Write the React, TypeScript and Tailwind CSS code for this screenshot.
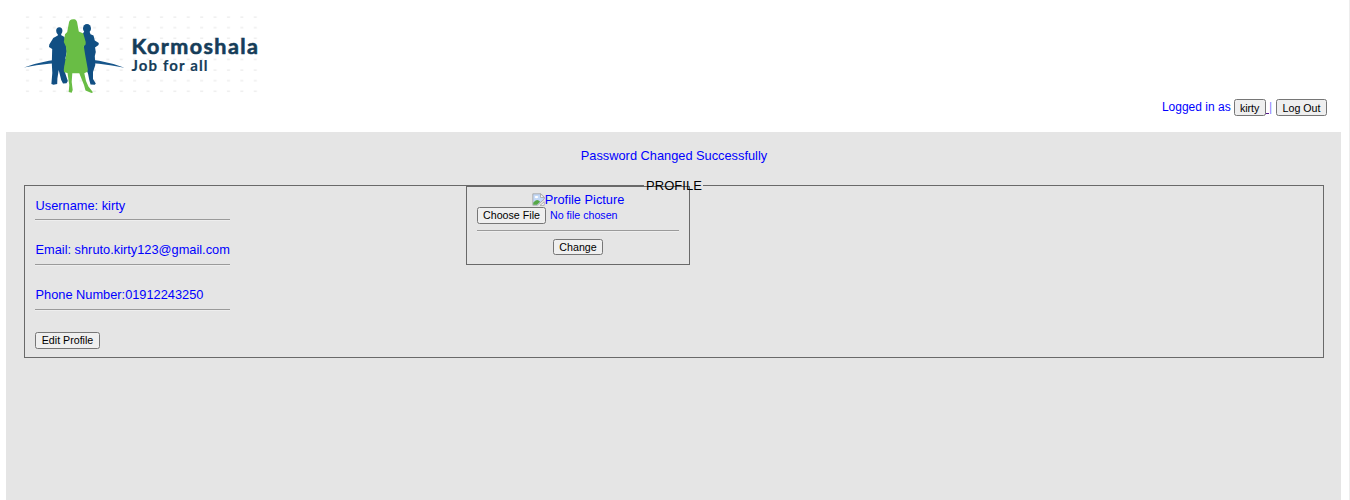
import type { ReactNode } from 'react';

function Button({ children, className = '' }: { children: ReactNode; className?: string }) {
  return (
    <button
      className={`flex shrink-0 items-center justify-center whitespace-nowrap rounded-[2.5px] border border-[#767676] bg-[#efefef] text-[10.667px] leading-none text-black ${className}`}
    >
      {children}
    </button>
  );
}

function Rule({ className = '' }: { className?: string }) {
  return <div className={`h-[2px] border-t border-b border-t-[#9a9a9a] border-b-[#eeeeee] ${className}`} />;
}

function Logo() {
  return (
    <svg width="236" height="82" viewBox="0 0 236 82" className="block">
      <defs>
        <pattern id="dots" x="0" y="0" width="13.4" height="10.6" patternUnits="userSpaceOnUse">
          <rect x="2" y="1.4" width="3" height="1.4" fill="#ededed" />
        </pattern>
      </defs>
      <rect width="236" height="80" fill="url(#dots)" />
      <path d="M0 52.6Q50 34.5 100.5 52.7Q50 42.5 0 52.6Z" fill="#17568b" />
      <g fill="#114f83">
        <ellipse cx="35.3" cy="15.8" rx="3.1" ry="3.6" />
        <path d="M33.8 18L37 18L37.3 20.3L40.5 22L43 36L41.5 43L40.5 56L43.8 66L42.5 68.3L39 68.6L37.2 65L34.7 55L33.4 63.5L33.2 69L29.5 69.7L27.4 69L28.3 58L27.8 48L28.2 34L25 32L25.3 29.5L29.3 23L33.8 20.5Z" />
        <ellipse cx="63" cy="13.4" rx="4" ry="4.4" />
        <path d="M60.5 16L65.5 16.5L66.5 19.2L69.5 20.5L70.8 25.5L74.8 28L74.5 30L71 32.5L71.8 37L70.8 41L71.3 50L69 57L69 64L71.8 68.5L70.8 69.8L66.5 69.5L65.3 65L64 58.5L61.5 53L59 46L59.8 32L58 20Z" />
      </g>
      <path
        d="M49.2 4.2C52.2 4.1 53.3 6 53.6 10L54.8 16.6L59.3 18.4L61.7 27L61.6 29.5L59.8 31.3L61.2 40L63.8 54.3L63.5 56.7L60.3 58.3L62 66L64.4 71.6L69 77.2L67.5 77.9L61.5 75.5L60 70L55.3 58.3H48.3L47.7 67L48.7 75L47.7 77.8L44.7 77L45.3 70L43.5 58L40 57.2L39.8 54.3L42.5 38L42 31.7L39.8 27L41 19.2L43.2 17L44.7 9C45 5.5 46.5 4.3 49.2 4.2Z"
        fill="#69bd45"
      />
      <g fill="#163d59" stroke="#163d59" fontFamily="Lato, 'Noto Sans', sans-serif" fontWeight="700">
        <text x="107.5" y="38.5" fontSize="21.5" strokeWidth="0.6" textLength="126.5" lengthAdjust="spacing">
          Kormoshala
        </text>
        <text x="107.5" y="56" fontSize="15" strokeWidth="0.15" textLength="76" lengthAdjust="spacing">
          Job for all
        </text>
      </g>
    </svg>
  );
}

function BrokenImage() {
  return (
    <svg width="13" height="13" viewBox="0 0 16 16" className="block shrink-0">
      <path d="M1 1h10l4 4v2.5L6.5 15H1z" fill="#c3d9f7" stroke="#a1a1a1" />
      <path d="M10.5 1v4.5H15z" fill="#fff" stroke="#a1a1a1" />
      <ellipse cx="5.5" cy="5" rx="2.3" ry="1.4" fill="#fff" />
      <path d="M1.5 14.5V12q4.5-6 8.5-1.2L6 14.5z" fill="#57a846" />
      <path d="M10 15.2H15V10.8z" fill="#fff" stroke="#a1a1a1" />
    </svg>
  );
}

export default function App() {
  return (
    <div className="flex h-[500px] flex-col overflow-hidden border-r border-[#ededed] bg-white font-['Liberation_Sans',Arial,sans-serif] text-[12.8px] leading-[15px] text-[#0000ff]">
      <header className="flex h-[132px] shrink-0 flex-col pl-[24px] pr-[22px] pt-[15px]">
        <Logo />
        <div className="mt-[2px] flex h-[17px] items-center justify-end text-[12px]">
          <span className="mr-[3px] -mt-px">Logged in as</span>
          <Button className="h-[17px] w-[32px] pt-px">kirty</Button>
          <span className="mt-px whitespace-pre text-[#551a8b] underline"> </span>
          <span className="-mt-px mr-[3px] w-[4px] text-[#8080ff]">|</span>
          <Button className="h-[17px] w-[51px] pt-px">Log Out</Button>
        </div>
      </header>
      <main className="ml-[6px] mr-[8px] flex grow flex-col bg-[#e5e5e5] pl-[18px] pr-[17px] pt-[16px]">
        <p className="text-center">Password Changed Successfully</p>
        <section className="relative mt-[22px] flex h-[173px] border border-[#696969] pl-[10px]">
          <div className="absolute left-[619px] -top-px h-px w-[59px] bg-[#e5e5e5]" />
          <div className="flex w-[195px] flex-col pt-[12px]">
            <p className="pl-[0.5px]">Username: kirty</p>
            <Rule className="mt-[6px]" />
            <p className="mt-[21px] whitespace-nowrap pl-[0.5px]">Email: shruto.kirty123@gmail.com</p>
            <Rule className="mt-[7px]" />
            <p className="mt-[21px] pl-[0.5px]">Phone Number:01912243250</p>
            <Rule className="mt-[7px]" />
            <Button className="mt-[21px] h-[17px] w-[65px]">Edit Profile</Button>
          </div>
          <div className="ml-[236px] flex h-[79px] w-[224px] flex-col border border-[#696969] px-[10px] pt-[5px]">
            <div className="flex h-[15px] items-center justify-center">
              <BrokenImage />
              <span>Profile Picture</span>
            </div>
            <div className="flex items-center">
              <Button className="h-[17px] w-[69px]">Choose File</Button>
              <span className="ml-[4px] text-[10.667px]">No file chosen</span>
            </div>
            <Rule className="mt-[6px]" />
            <Button className="mt-[7px] h-[16px] w-[50px] self-center">Change</Button>
          </div>
          <h2 className="absolute left-[621px] -top-[8px] text-[13px] tracking-[0.05px] text-black">PROFILE</h2>
        </section>
      </main>
    </div>
  );
}
